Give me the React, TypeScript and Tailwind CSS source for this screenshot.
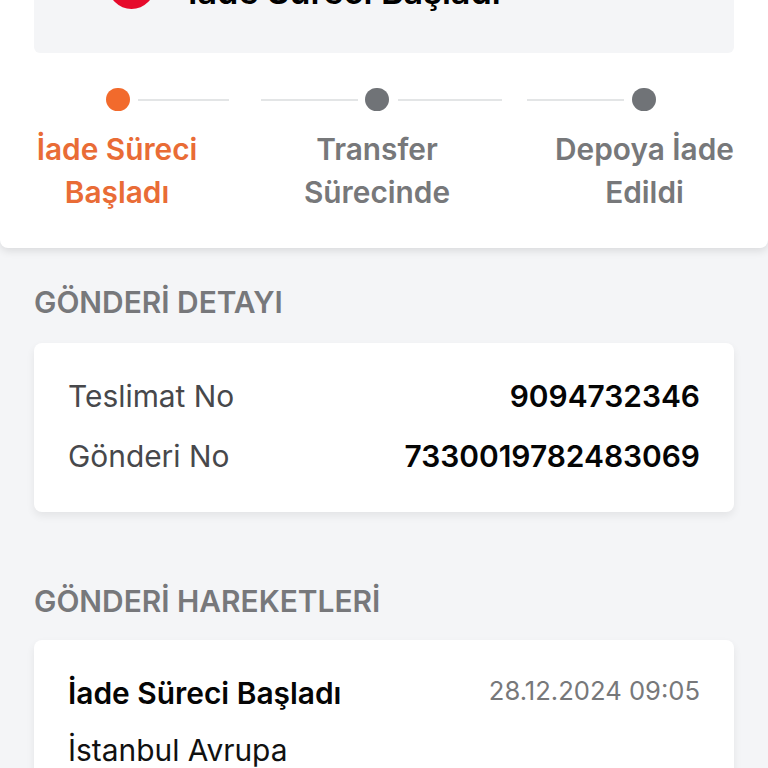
import React from 'react';

interface Step {
  label: [string, string];
  active?: boolean;
}

const steps: Step[] = [
  { label: ['İade Süreci', 'Başladı'], active: true },
  { label: ['Transfer', 'Sürecinde'] },
  { label: ['Depoya İade', 'Edildi'] },
];

const details = [
  { label: 'Teslimat No', value: '9094732346' },
  { label: 'Gönderi No', value: '7330019782483069' },
];

const StepTracker: React.FC = () => (
  <div className="mt-[35px] px-[34px]">
    <div className="flex h-[23px] items-center pl-[72px]">
      <span className="size-[23.5px] shrink-0 rounded-full bg-[#f26a2c]" />
      <span className="ml-2 h-0.5 w-[91px] shrink-0 bg-[#e3e5e6]" />
      <span className="ml-8 h-0.5 w-[97.5px] shrink-0 bg-[#e3e5e6]" />
      <span className="ml-[7px] size-[23.5px] shrink-0 rounded-full bg-[#707377]" />
      <span className="ml-[9px] h-0.5 w-[104.5px] shrink-0 bg-[#e3e5e6]" />
      <span className="ml-[25px] h-0.5 w-[97px] shrink-0 bg-[#e3e5e6]" />
      <span className="ml-2 size-[23.5px] shrink-0 rounded-full bg-[#707377]" />
    </div>
    <div className="mt-[17px] grid grid-cols-[166px_354px_181px] text-center text-[29.8px] leading-[43px] font-semibold whitespace-nowrap">
      {steps.map((step) => (
        <div key={step.label[0]} className={step.active ? 'text-[#e96c36]' : 'text-[#77787a]'}>
          <p>{step.label[0]}</p>
          <p>{step.label[1]}</p>
        </div>
      ))}
    </div>
  </div>
);

const App: React.FC = () => {
  return (
    <div className="h-[768px] overflow-hidden bg-[#f4f5f7] font-['Inter',sans-serif]">
      <section className="h-[248px] rounded-b-lg bg-white shadow-[0_3px_8px_rgba(0,0,0,0.11)]">
        <div className="mx-[34px] flex h-[53px] items-start overflow-hidden rounded-b-md bg-[#f4f5f7] pl-[74px]">
          <span className="-mt-[38px] size-[47px] shrink-0 rounded-full bg-[#e60a2b]" />
          <h1 className="-mt-[28px] ml-[33px] text-[34.2px] leading-[40px] font-semibold text-black">
            İade Süreci Başladı
          </h1>
        </div>
        <StepTracker />
      </section>

      <section className="px-[34px] pt-[33px]">
        <h2 className="text-[29.9px] leading-[43px] font-semibold text-[#77787b]">GÖNDERİ DETAYI</h2>
        <div className="mt-[19px] h-[169px] rounded-lg bg-white px-[34px] pt-[23px] shadow-[0_4px_8px_rgba(0,0,0,0.07)]">
          {details.map((row) => (
            <div key={row.label} className="flex h-[60px] items-center justify-between text-[29.9px]">
              <span className="text-[#47484b]">{row.label}</span>
              <span className="font-semibold text-[#050505]">{row.value}</span>
            </div>
          ))}
        </div>
      </section>

      <section className="px-[34px] pt-[67px]">
        <h2 className="text-[29.9px] leading-[44px] font-semibold text-[#77787b]">GÖNDERİ HAREKETLERİ</h2>
        <div className="mt-[17px] h-[180px] rounded-lg bg-white px-[34px] pt-[31px] shadow-[0_4px_8px_rgba(0,0,0,0.07)]">
          <div className="flex justify-between">
            <h3 className="text-[29.9px] leading-[44px] font-semibold text-[#050505]">İade Süreci Başladı</h3>
            <time className="text-[25.6px] leading-[40px] text-[#77787a]">28.12.2024 09:05</time>
          </div>
          <p className="mt-[14px] text-[29.9px] leading-[43px] text-[#111111]">İstanbul Avrupa</p>
        </div>
      </section>
    </div>
  );
};

export default App;
